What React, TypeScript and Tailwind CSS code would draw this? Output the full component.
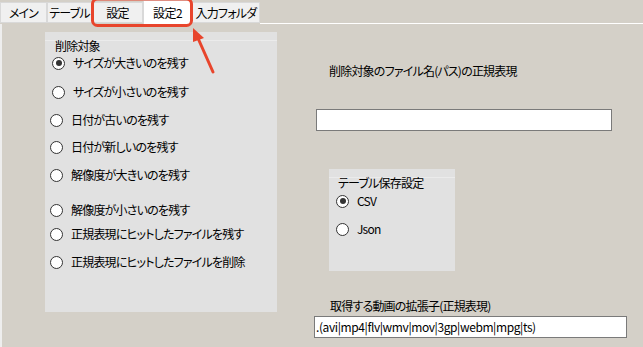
import React from "react";

const font = "font-['Meiryo_UI','Noto_Sans_CJK_JP',sans-serif] [font-feature-settings:'palt']";

function Radio({ label, checked, className }: { label: string; checked?: boolean; className: string }) {
  return (
    <div className={`flex items-center h-[16px] ${className}`}>
      <span className="w-[13px] h-[13px] rounded-full border border-[#333] bg-white flex items-center justify-center shrink-0">
        {checked && <span className="w-[6px] h-[6px] rounded-full bg-[#333]" />}
      </span>
      <span className="ml-[8px] text-[12px] leading-[16px] tracking-[-0.8px] text-black whitespace-nowrap">{label}</span>
    </div>
  );
}

const tabs = [
  { label: "メイン", w: "w-[47px]" },
  { label: "テーブル", w: "w-[45px]" },
  { label: "設定", w: "w-[51px]" },
  { label: "設定2", w: "w-[49px]", active: true },
  { label: "入力フォルダ", w: "w-[68px]" },
];

const targets = [
  { label: "サイズが大きいのを残す", checked: true, cls: "mt-[7px] ml-[7px]" },
  { label: "サイズが小さいのを残す", cls: "mt-[13px] ml-[7px]" },
  { label: "日付が古いのを残す", cls: "mt-[12px] ml-[5px]" },
  { label: "日付が新しいのを残す", cls: "mt-[11px] ml-[5px]" },
  { label: "解像度が大きいのを残す", cls: "mt-[12px] ml-[5px]" },
  { label: "解像度が小さいのを残す", cls: "mt-[19px] ml-[5px]" },
  { label: "正規表現にヒットしたファイルを残す", cls: "mt-[8px] ml-[5px]" },
  { label: "正規表現にヒットしたファイルを削除", cls: "mt-[12px] ml-[5px]" },
];

export default function App() {
  return (
    <div className={`relative w-[643px] h-[347px] overflow-hidden bg-[#d4d0c8] ${font}`}>
      {/* SECTION: TABS */}
      <div className="flex items-end h-[24px]">
        {tabs.map((t, i) =>
          t.active ? (
            <div key={i} className={`${t.w} h-[24px] bg-white border-x border-t border-[#d9d9d9] flex items-center justify-center text-[12px] tracking-[-0.5px] text-black whitespace-nowrap`}>
              {t.label}
            </div>
          ) : (
            <div key={i} className={`${t.w} h-[21px] mb-[1px] bg-[#f0f0f0] border border-[#d9d9d9] flex items-center justify-center text-[12px] tracking-[-0.8px] text-black whitespace-nowrap`}>
              {t.label}
            </div>
          )
        )}
        <div className="flex-1 h-[1px] bg-white" />
      </div>

      {/* SECTION: CONTENT */}
      <div className="flex border-l-2 border-[#eeeeee] h-[323px]">
        <div className="ml-[43px] mt-[8px] w-[232px] h-[280px] bg-[#e1e1e1] flex flex-col">
          <div className="relative h-[16px]">
            <div className="absolute left-0 right-0 top-[8px] h-[1px] bg-[#ebebeb]" />
            <span className="relative ml-[10px] text-[12px] leading-[16px] tracking-[-0.8px] text-black">削除対象</span>
          </div>
          {targets.map((r, i) => (
            <Radio key={i} label={r.label} checked={r.checked} className={r.cls} />
          ))}
        </div>

        <div className="ml-[37px] pt-[39px] flex flex-col items-start">
          <div className="ml-[15px] h-[16px] text-[12px] leading-[16px] tracking-[-0.8px] text-black">削除対象のファイル名(パス)の正規表現</div>
          <div className="ml-[2px] mt-[30px] w-[296px] h-[22px] bg-white border border-[#7a7a7a]" />
          <div className="ml-[15px] mt-[38px] w-[126px] h-[102px] bg-[#e1e1e1] flex flex-col">
            <div className="relative h-[16px]">
              <div className="absolute left-0 right-0 top-[8px] h-[1px] bg-[#ebebeb]" />
              <span className="relative ml-[9px] text-[12px] leading-[16px] tracking-[-0.8px] text-black">テーブル保存設定</span>
            </div>
            <Radio label="CSV" checked className="mt-[8px] ml-[7px]" />
            <Radio label="Json" className="mt-[12px] ml-[7px]" />
          </div>
          <div className="ml-[16px] mt-[27px] h-[16px] text-[12px] leading-[16px] tracking-[-0.8px] text-black">取得する動画の拡張子(正規表現)</div>
          <div className="mt-[2px] w-[313px] h-[22px] bg-white border border-[#7a7a7a] flex items-center pl-[1px] text-[12px] tracking-[-0.4px] text-black">
            .(avi|mp4|flv|wmv|mov|3gp|webm|mpg|ts)
          </div>
        </div>
      </div>

      {/* annotation */}
      <svg className="absolute inset-0 pointer-events-none" width="643" height="347">
        <rect x="92.5" y="-1" width="99" height="26.5" rx="5" fill="none" stroke="#e8452c" strokeWidth="3" />
        <line x1="213" y1="72" x2="197" y2="36" stroke="#e8452c" strokeWidth="3" strokeLinecap="round" />
        <polygon points="193,28 204,38 193,42" fill="#e8452c" />
      </svg>
    </div>
  );
}
